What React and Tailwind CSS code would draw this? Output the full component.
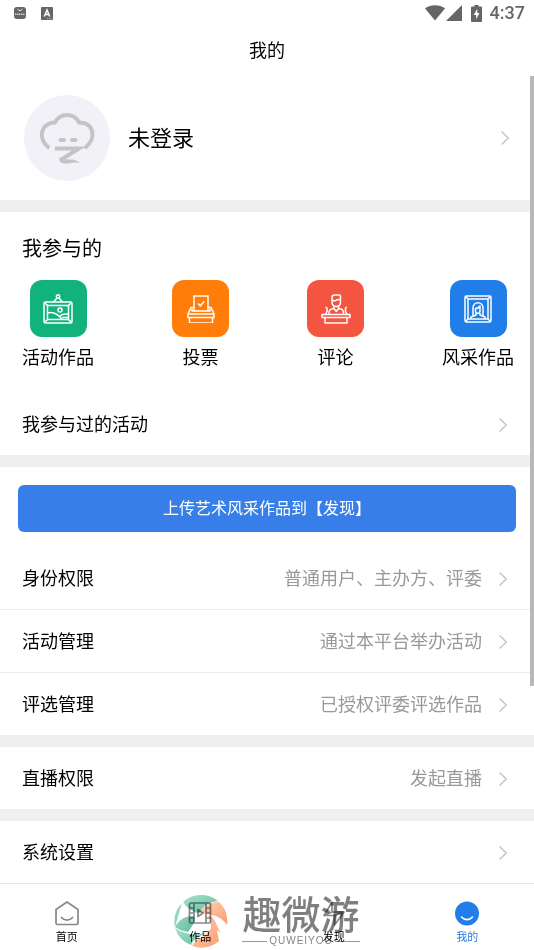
const shortcuts = [
  { label: "活动作品", color: "bg-[#12b27c]", Icon: PaintingIcon },
  { label: "投票", color: "bg-[#ff7d08]", Icon: BallotIcon },
  { label: "评论", color: "bg-[#f35540]", Icon: SpeakerIcon },
  { label: "风采作品", color: "bg-[#217ee8]", Icon: PortraitIcon },
];

export default function App() {
  return (
    <div className="relative flex min-h-screen flex-col bg-white font-['Roboto','Noto_Sans_CJK_SC',sans-serif] text-black">
      <StatusBar />

      <header className="flex h-[50px] items-center justify-center">
        <h1 className="text-lg">我的</h1>
      </header>

      <main className="flex-1">
        {/* Profile */}
        <button className="flex w-full items-center px-6 py-[19px] text-left">
          <Avatar />
          <span className="ml-[18px] flex-1 text-[22px]">未登录</span>
          <Chevron />
        </button>

        <Band />

        {/* Shortcuts */}
        <section>
          <h2 className="px-[22px] pt-[23px] text-xl leading-7">我参与的</h2>
          <div className="flex justify-between pt-[17px] pr-5 pb-[21px] pl-[22px]">
            {shortcuts.map(({ label, color, Icon }) => (
              <button key={label} className="flex flex-col items-center gap-[7px]">
                <span className={`flex h-[57px] w-[57px] items-center justify-center rounded-xl ${color}`}>
                  <Icon />
                </span>
                <span className="text-lg leading-7">{label}</span>
              </button>
            ))}
          </div>
          <Row label="我参与过的活动" />
        </section>

        <Band />

        <section>
          <div className="px-[18px] pt-[18px] pb-[15px]">
            <button className="h-[47px] w-full rounded-md bg-[#377ee9] text-base text-white">
              上传艺术风采作品到【发现】
            </button>
          </div>
          <ul className="divide-y divide-[#ececec]">
            <li><Row label="身份权限" value="普通用户、主办方、评委" /></li>
            <li><Row label="活动管理" value="通过本平台举办活动" /></li>
            <li><Row label="评选管理" value="已授权评委评选作品" /></li>
          </ul>
        </section>

        <Band />
        <Row label="直播权限" value="发起直播" />
        <Band />
        <Row label="系统设置" />
      </main>

      <nav className="relative grid h-[67px] grid-cols-4 border-t border-[#e8e8e8]">
        <Tab label="首页" icon={<HomeIcon />} />
        <Tab label="作品" icon={<FilmIcon />} />
        <Tab label="发现" icon={<DiscoverIcon />} />
        <Tab label="我的" icon={<SmileIcon />} active />
        <Watermark />
      </nav>

      {/* Scroll thumb */}
      <div className="absolute top-[76px] right-0 h-[610px] w-1 bg-[#b8b8b8]" />
    </div>
  );
}

function StatusBar() {
  return (
    <div className="flex h-[26px] items-center justify-between pr-[9px] pl-[14px] text-[#666]">
      <div className="flex items-center gap-[15px]">
        <svg width="12" height="12" viewBox="0 0 12 12">
          <rect width="12" height="12" rx="3" fill="currentColor" />
          <path d="M3.5 2l2.5 2 2.500-2" stroke="#eee" fill="none" />
          <path d="M1 7.300h10" stroke="#ccc" strokeWidth="1.500" strokeDasharray="1.500 .5" />
        </svg>
        <svg width="12" height="13" viewBox="0 0 12 13">
          <rect width="12" height="13" rx="1" fill="currentColor" />
          <path d="M3.300 9.500L6 3l2.700 6.500M4.300 7.500h3.400" stroke="#fff" strokeWidth="1.500" fill="none" />
          <path d="M6 11.700h5" stroke="#ccc" strokeWidth=".8" strokeDasharray="1 .6" />
        </svg>
      </div>
      <div className="flex items-center">
        <svg width="20" height="16" viewBox="0 0 20 16" fill="currentColor">
          <path d="M0 3.500C5.500-.8 14.500-.8 20 3.500L10 15.500z" />
        </svg>
        <svg className="ml-px" width="16" height="16" viewBox="0 0 16 16" fill="currentColor">
          <path d="M0 16L16 0v16z" />
        </svg>
        <svg className="ml-[9px]" width="11" height="17" viewBox="0 0 11 17">
          <path d="M3.500 0h4v1.500H10q1 0 1 1V16q0 1-1 1H1q-1 0-1-1V2.500q0-1 1-1h2.500z" fill="currentColor" />
          <path d="M6.300 3.800L2.600 10h2.500v4.200L8.500 8H6.300z" fill="#fff" />
        </svg>
        <span className="ml-2 text-lg font-medium">4:37</span>
      </div>
    </div>
  );
}

function Band() {
  return <div className="h-3 bg-[#efefef]" />;
}

function Chevron() {
  return (
    <svg width="10" height="16" viewBox="0 0 10 16" fill="none" stroke="#c4c4c8" strokeWidth="1.400">
      <path d="M1.500 1.500L8.300 8l-6.800 6.500" />
    </svg>
  );
}

function Row({ label, value }) {
  return (
    <button className="flex h-[62px] w-full items-center pt-0.5 pr-[26px] pl-[22px] text-left text-lg">
      <span className="flex-1">{label}</span>
      <span className="mr-4 text-[#999]">{value}</span>
      <Chevron />
    </button>
  );
}

function Tab({ label, icon, active }) {
  return (
    <a
      href="#"
      className={`flex flex-col items-center pt-4 text-[11px] leading-4 ${active ? "text-[#217ee8]" : "text-black"}`}
    >
      <span className="mb-1 flex h-[26px] w-[26px] items-center justify-center">{icon}</span>
      {label}
    </a>
  );
}

function Avatar() {
  return (
    <svg width="86" height="86" viewBox="0 0 86 86" fill="none" stroke="#c4c4c4" strokeWidth="4" strokeLinecap="round" strokeLinejoin="round">
      <circle cx="43" cy="43" r="43" fill="#f2f1f8" stroke="none" />
      <path d="M24 52C14 44 16 28 31 27.500C36 17.500 50 17.500 55 27.500C71 28 72 44 62 52" />
      <path d="M36.500 45h3.500M48 45h3.500" />
      <path d="M33 53.500H55L37.500 64.500" strokeLinecap="square" strokeLinejoin="miter" />
      <path d="M36 63C43 66 49 62 56 68C48 66 45 70 38 68Q34 66 36 63Z" fill="#c4c4c4" stroke="none" />
    </svg>
  );
}

function PaintingIcon() {
  return (
    <svg width="30" height="30" viewBox="0 0 30 30" fill="none" stroke="#fff" strokeWidth="1.500" strokeLinejoin="round">
      <circle cx="15" cy="2.500" r="1.700" />
      <path d="M14 4l-3.500 4M16 4l3.500 4" />
      <rect x="1" y="8" width="28" height="21" rx="1.500" />
      <rect x="4.500" y="11.500" width="21" height="14" />
      <path d="M1.500 8.500l3 3M28.500 8.500l-3 3M1.500 28.500l3-3M28.500 28.500l-3-3" />
      <path d="M4.500 19C10 17.500 15 20 19 25.500M16.500 22.500C19 19.500 22 19.500 25.500 20.500M19 23.500h6.500" />
      <circle cx="17" cy="16" r="2" />
    </svg>
  );
}

function BallotIcon() {
  return (
    <svg width="28" height="28" viewBox="0 0 28 28" fill="none" stroke="#fff" strokeWidth="1.500">
      <path d="M7 16V1h14v15M11 8.500l2.300 2.300 4-4.600" />
      <path d="M7 12.500H4L1 19v3.500h26V19l-3-6.500h-3M4.500 16h19M1 19h26M2.500 22.500V28h23v-5.500" />
      <path d="M5 13.500V16M23 13.500V16" />
    </svg>
  );
}

function SpeakerIcon() {
  return (
    <svg width="30" height="30" viewBox="0 0 30 30" fill="none" stroke="#fff" strokeWidth="1.500" strokeLinejoin="round">
      <path d="M11 8V3.500Q11 1 13.500 1h5Q19.500 1 19.500 3.500V8Q19.500 12.500 15.200 12.500Q11 12.500 11 8z" />
      <path d="M11 6q3 1.500 4.500 0q2-1 4 0M13 12.500v2l2.300 3 2.200-3v-2" />
      <path d="M8 20.500v-2Q8 15 13 14.500M22.500 20.500v-2Q22.500 15 17.500 14.500" />
      <path d="M4.500 13l1.500 1v3.500l-1.500 3M26 13l-1.500 1v3.500l1.500 3" />
      <path d="M1 20.500h28V23.500H1zM4 24v5h22v-5" />
    </svg>
  );
}

function PortraitIcon() {
  return (
    <svg width="28" height="28" viewBox="0 0 28 28" fill="none" stroke="#fff" strokeWidth="1.500" strokeLinejoin="round">
      <rect x="1" y="1" width="26" height="26" rx="1.500" />
      <rect x="4" y="4" width="20" height="20" />
      <path d="M1.500 1.500l2.500 2.500M26.500 1.500l-2.500 2.500M1.500 26.500l2.500-2.500M26.500 26.500l-2.500-2.500" />
      <path d="M9 20.500V13C9 6 19 6 19 13V20.500" />
      <path d="M11.500 16.500V13.500q3 0 4.500-2.500V16.500q-.5 2-2.200 2t-2.300-2zM7 24V22l5-2v-2M21 24V22l-5-2v-2" />
    </svg>
  );
}

function HomeIcon() {
  return (
    <svg width="26" height="26" viewBox="0 0 26 26" fill="none" stroke="#888" strokeWidth="1.700" strokeLinejoin="round" strokeLinecap="round">
      <path d="M13 2L24 9.500V23Q24 24.500 22.500 24.500H3.500Q2 24.500 2 23V9.500z" />
      <path d="M7.500 17.500C10.500 21 15.500 21 18.500 17.500" />
    </svg>
  );
}

function FilmIcon() {
  return (
    <svg width="26" height="26" viewBox="0 0 26 26" fill="none" stroke="#888" strokeWidth="1.700" strokeLinejoin="round">
      <rect x="2.500" y="3" width="21" height="20" rx="1.500" />
      <path d="M7 3v20M19 3v20M2.500 8H7M2.500 13H7M2.500 18H7M19 8h4.500M19 13h4.500M19 18h4.500" />
      <path d="M11 9.500v7l5-3.500z" />
    </svg>
  );
}

function DiscoverIcon() {
  return (
    <svg width="26" height="26" viewBox="0 0 26 26" fill="none" stroke="#888" strokeWidth="1.700" strokeLinejoin="round">
      <path d="M11 2L3 15.500H13.500V25L23 12H11z" />
      <path d="M11 12L3 15.500M13.500 15.500L23 12" />
    </svg>
  );
}

function SmileIcon() {
  return (
    <svg width="26" height="26" viewBox="0 0 26 26" fill="none">
      <circle cx="13" cy="13.500" r="12" fill="#217ee8" />
      <path d="M7.500 17C10.500 20.500 15.500 20.500 18.500 17" stroke="#fff" strokeWidth="1.600" strokeLinecap="round" />
    </svg>
  );
}

// Site logo laid over the tab bar
function Watermark() {
  return (
    <div className="pointer-events-none absolute inset-x-0 top-[10px] flex justify-center gap-[14px] mix-blend-multiply">
      <svg width="54" height="54" viewBox="0 0 54 54">
        <defs>
          <linearGradient id="leaf" x1="0" y1="0" x2="1" y2="1">
            <stop offset="0" stopColor="#a9e2cc" />
            <stop offset="1" stopColor="#62bb9f" />
          </linearGradient>
          <linearGradient id="peach" x1="0" y1="0" x2="1" y2="1">
            <stop offset="0" stopColor="#fbd3b4" />
            <stop offset="1" stopColor="#fb9c72" />
          </linearGradient>
        </defs>
        <path d="M9 8A26.500 26.500 0 0 1 44 7C36 8 29 11 26 19C19 19 13 14 9 8Z" fill="url(#leaf)" />
        <path d="M8 9A26.500 26.500 0 0 0 1 33C5 25 12 22 20 22C22 28 18 32 14 38C8 37 4 35 1 33Z" fill="url(#leaf)" />
        <path d="M1 34A26.500 26.500 0 0 0 17 51C20 44 26 42 34 38C24 42 11 41 1 34Z" fill="url(#leaf)" />
        <path d="M45 8A26.500 26.500 0 0 1 53 31C49 25 44 21 27 19C29 12 35 8 45 8Z" fill="url(#peach)" />
        <path d="M34 21C42 23 41 31 47 39L43 36L45 47A26.500 26.500 0 0 1 18 52C21 45 33 43 37 34C37 29 36 25 34 21Z" fill="url(#peach)" />
      </svg>
      <div className="flex flex-col items-center pt-0.5 text-black/50">
        <span className="text-[39px] leading-10 font-medium">趣微游</span>
        <span className="flex w-full items-center justify-center gap-0.5 font-['Liberation_Sans',sans-serif] text-[10px] leading-[10px]">
          <span className="h-px flex-1 bg-black/40" />
          <span className="tracking-widest">QUWEIYOU</span>
          <span className="h-px flex-1 bg-black/40" />
        </span>
      </div>
    </div>
  );
}
